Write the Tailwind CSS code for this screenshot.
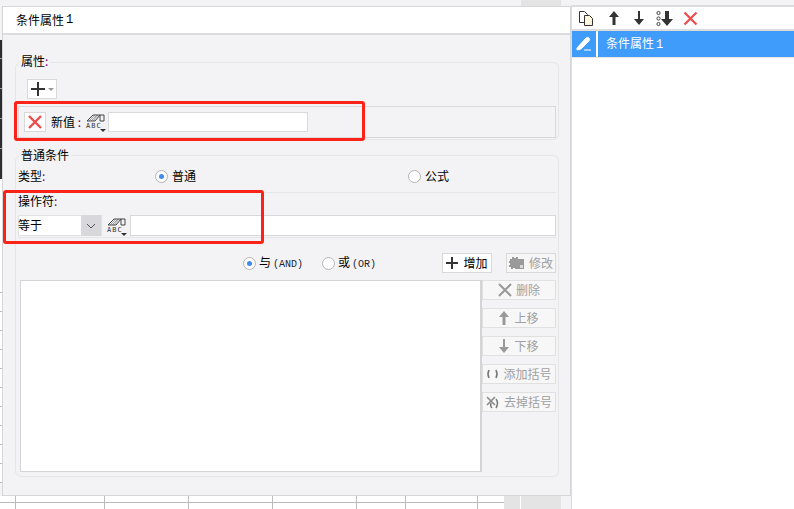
<!DOCTYPE html>
<html lang="zh">
<head>
  <meta charset="UTF-8">
  <title>条件属性</title>
  <script src="https://cdn.jsdelivr.net/npm/@tailwindcss/browser@4"></script>
</head>
<body class="w-[794px] h-[509px] overflow-hidden relative flex bg-white text-[12px] leading-none text-black font-['Noto_Sans_CJK_SC','Liberation_Sans',sans-serif]">

  <!-- left: dialog with sheet behind -->
  <div class="w-[571px] h-[509px] flex flex-col bg-[#f3f3f5]">
    <div class="h-[6px] flex shrink-0">
      <div class="w-[521px]"></div>
      <div class="w-[40px] bg-[#e4e4e4]"></div>
    </div>

    <div class="h-[490px] flex shrink-0">
      <!-- sheet row headers peeking out -->
      <div class="w-[2px] flex flex-col shrink-0">
        <div class="h-[34px] bg-[#f3f3f5]"></div>
        <div class="h-[19px] bg-[#2b2d2f] border-b border-[#999]"></div>
        <div class="h-[30px] bg-[#2b2d2f] border-b border-[#999]"></div>
        <div class="h-[30px] bg-[#2b2d2f] border-b border-[#999]"></div>
        <div class="h-[30px] bg-[#2b2d2f] border-b border-[#999]"></div>
        <div class="h-[30px] bg-[#2b2d2f]"></div>
        <div class="h-[95px] bg-white"></div>
        <div class="h-[19px] bg-white border-b border-[#bbb]"></div>
        <div class="h-[19px] bg-white border-b border-[#bbb]"></div>
        <div class="h-[19px] bg-white border-b border-[#bbb]"></div>
        <div class="h-[19px] bg-white border-b border-[#bbb]"></div>
        <div class="h-[19px] bg-white border-b border-[#bbb]"></div>
        <div class="h-[19px] bg-white border-b border-[#bbb]"></div>
        <div class="h-[19px] bg-white border-b border-[#bbb]"></div>
        <div class="h-[19px] bg-white border-b border-[#bbb]"></div>
        <div class="h-[19px] bg-white border-b border-[#bbb]"></div>
        <div class="h-[19px] bg-white border-b border-[#bbb]"></div>
        <div class="h-[19px] bg-white border-b border-[#bbb]"></div>
      </div>

      <!-- dialog -->
      <div class="w-[569px] h-[490px] border border-[#d6d6d8] bg-[#f3f3f5] flex flex-col">
        <div class="h-[28px] bg-white border-b-2 border-[#dcdcde] flex items-center pl-[13px] shrink-0">条件属性<span class="ml-[2px] font-['Liberation_Mono',monospace] text-[12px]">1</span></div>

        <!-- 属性 group -->
        <div class="relative ml-[12px] mt-[27px] w-[544px] h-[78px] border border-[#e6e6e9] rounded-[6px] px-[2px] pt-[16px] shrink-0">
          <span class="absolute left-[3px] top-[-8px] px-[2px] bg-[#f3f3f5]">属性<span class="text-[#707]">:</span></span>
          <div class="ml-[9px] w-[30px] h-[20px] bg-white border border-[#d9d9d9] flex items-center justify-center">
            <svg width="28" height="18" viewBox="0 0 28 18"><path d="M3 9h14M10 2v14" stroke="#333" stroke-width="2"/><path d="M20 8h6l-3 3z" fill="#999"/></svg>
          </div>
          <div class="mt-[7px] h-[32px] border border-[#d9d9db] flex items-center pl-[5px]">
            <div class="w-[22px] h-[20px] bg-white border border-[#d9d9d9] flex items-center justify-center">
              <svg width="16" height="16" viewBox="0 0 16 16"><path d="M2 2l12 12M14 2L2 14" stroke="#ee4b4b" stroke-width="2.4"/></svg>
            </div>
            <span class="ml-[5px] w-[35px]">新值<span class="text-[#707]"> :</span></span>
            <div class="relative w-[20px] h-[20px] shrink-0">
              <svg class="block" width="20" height="11" viewBox="0 0 20 11"><path d="M1 9l6-6h7l-5 6zM14 3h4v6h-4z" fill="none" stroke="#444" stroke-width="1"/><path d="M3 9l6-6M5 9l6-6M7 9l5-6" stroke="#666" stroke-width="0.6"/></svg>
              <span class="block text-[7px] leading-[7px] tracking-[1px] font-['DejaVu_Sans_Mono',monospace] text-[#333]">ABC</span>
              <svg class="absolute right-0 bottom-0" width="6" height="3" viewBox="0 0 6 3"><path d="M0 0h6L3 3z" fill="#333"/></svg>
            </div>
            <div class="ml-[2px] w-[200px] h-[20px] bg-white border border-[#d9d9d9]"></div>
          </div>
        </div>

        <!-- 普通条件 group -->
        <div class="relative ml-[12px] mt-[15px] w-[544px] h-[322px] border border-[#e6e6e9] rounded-[6px] px-[2px] pt-[11px] shrink-0">
          <span class="absolute left-[3px] top-[-7px] px-[2px] bg-[#f3f3f5]">普通条件</span>

          <div class="h-[18px] flex items-center">
            <span class="w-[137px]">类型<span class="text-[#707]">:</span></span>
            <div class="w-[253px] flex items-center gap-[4px]">
              <span class="w-[13px] h-[13px] rounded-full border border-[#b4b4b4] bg-white flex items-center justify-center"><span class="w-[5px] h-[5px] rounded-full bg-[#3f8cf0]"></span></span>
              <span>普通</span>
            </div>
            <div class="flex items-center gap-[4px]">
              <span class="w-[13px] h-[13px] rounded-full border border-[#b4b4b4] bg-white"></span>
              <span>公式</span>
            </div>
          </div>
          <div class="mt-[7px] h-px bg-[#e6e6e9]"></div>

          <div class="mt-[1px] h-[14px] flex items-center">操作符<span class="text-[#707]">:</span></div>
          <div class="mt-[7px] h-[21px] flex items-center">
            <div class="w-[84px] h-[21px] bg-white border border-[#e2e2e2] flex items-center justify-between">
              <span class="ml-[-1px] mt-[-1px]">等于</span>
              <span class="w-[20px] h-[21px] bg-[#d8d8dc] flex items-center justify-center">
                <svg width="10" height="6" viewBox="0 0 10 6"><path d="M1 1l4 4 4-4" fill="none" stroke="#555" stroke-width="1"/></svg>
              </span>
            </div>
            <div class="relative ml-[5px] w-[20px] h-[20px] shrink-0">
              <svg class="block" width="20" height="11" viewBox="0 0 20 11"><path d="M1 9l6-6h7l-5 6zM14 3h4v6h-4z" fill="none" stroke="#444" stroke-width="1"/><path d="M3 9l6-6M5 9l6-6M7 9l5-6" stroke="#666" stroke-width="0.6"/></svg>
              <span class="block text-[7px] leading-[7px] tracking-[1px] font-['DejaVu_Sans_Mono',monospace] text-[#333]">ABC</span>
              <svg class="absolute right-0 bottom-0" width="6" height="3" viewBox="0 0 6 3"><path d="M0 0h6L3 3z" fill="#333"/></svg>
            </div>
            <div class="ml-[3px] flex-1 h-[21px] bg-white border border-[#d9d9d9]"></div>
          </div>
          <div class="mt-[1px] h-px bg-[#e6e6e9]"></div>

          <div class="mt-[15px] h-[20px] flex items-center">
            <div class="ml-[225px] w-[79px] flex items-center gap-[3px]">
              <span class="w-[13px] h-[13px] rounded-full border border-[#b4b4b4] bg-white flex items-center justify-center"><span class="w-[5px] h-[5px] rounded-full bg-[#3f8cf0]"></span></span>
              <span>与<span class="ml-[2px] text-[10px] font-['Liberation_Mono',monospace] text-[#223]">(AND)</span></span>
            </div>
            <div class="w-[120px] flex items-center gap-[3px]">
              <span class="w-[13px] h-[13px] rounded-full border border-[#b4b4b4] bg-white"></span>
              <span>或<span class="ml-[2px] text-[10px] font-['Liberation_Mono',monospace] text-[#223]">(OR)</span></span>
            </div>
            <div class="w-[50px] h-[20px] bg-white border border-[#d9d9d9] flex items-center justify-center gap-[5px]">
              <svg width="12" height="12" viewBox="0 0 12 12"><path d="M0 6h12M6 0v12" stroke="#333" stroke-width="2"/></svg>
              <span>增加</span>
            </div>
            <div class="ml-[14px] w-[50px] h-[20px] bg-[#f6f6f7] border border-[#d9d9d9] flex items-center justify-center gap-[4px] text-[#a0a0a0]">
              <svg width="16" height="14" viewBox="0 0 16 14"><path d="M1 3h2V1h2v1h2V1h2v2h6v10H6v-1H4v1H2v-2H0V9h1V7H0V5h1z" fill="#9a9a9a"/><rect x="11" y="9" width="3" height="3" fill="#d8d8d8"/></svg>
              <span>修改</span>
            </div>
          </div>

          <div class="mt-[7px] flex">
            <div class="ml-[2px] w-[462px] h-[192px] bg-white border border-[#d4d4d6] border-r-2"></div>
            <div class="w-[74px] flex flex-col gap-[8px] text-[#a0a0a0]">
              <div class="h-[20px] bg-[#f7f7f8] border border-[#e0e0e0] flex items-center justify-center gap-[4px]">
                <svg width="14" height="14" viewBox="0 0 14 14"><path d="M1 1l12 12M13 1L1 13" stroke="#999" stroke-width="2"/></svg>
                <span>删除</span>
              </div>
              <div class="h-[20px] bg-[#f7f7f8] border border-[#e0e0e0] flex items-center justify-center gap-[5px]">
                <svg width="10" height="14" viewBox="0 0 10 14"><path d="M5 0l5 6H6.5v8h-3V6H0z" fill="#999"/></svg>
                <span>上移</span>
              </div>
              <div class="h-[20px] bg-[#f7f7f8] border border-[#e0e0e0] flex items-center justify-center gap-[5px]">
                <svg width="10" height="14" viewBox="0 0 10 14"><path d="M5 14l5-6H6V0H4v8H0z" fill="#999"/></svg>
                <span>下移</span>
              </div>
              <div class="h-[20px] bg-[#f7f7f8] border border-[#e0e0e0] flex items-center justify-center gap-[4px]">
                <svg width="13" height="10" viewBox="0 0 13 10"><path d="M3 1Q1 5 3 9M10 1q2 4 0 8" fill="none" stroke="#777" stroke-width="1.6"/></svg>
                <span>添加括号</span>
              </div>
              <div class="h-[20px] bg-[#f7f7f8] border border-[#e0e0e0] flex items-center justify-center gap-[4px]">
                <svg width="14" height="13" viewBox="0 0 14 13"><path d="M1 1l8 8M9 1L1 9" stroke="#888" stroke-width="1.6"/><path d="M10 3q3 4 0 9M5 7q-1 3 1 5" fill="none" stroke="#777" stroke-width="1.5"/></svg>
                <span>去掉括号</span>
              </div>
            </div>
          </div>
        </div>
      </div>
    </div>

    <!-- sheet grid under the dialog -->
    <div class="h-[13px] flex shrink-0">
      <div class="w-[504px] bg-white flex">
        <div class="w-[15px] h-full border-t-0 flex flex-col"><div class="h-[6px] bg-white"></div><div class="h-px bg-[#bbb]"></div></div>
        <div class="w-[89px] border-l border-[#bbb] flex flex-col"><div class="h-[6px]"></div><div class="h-px bg-[#bbb]"></div></div>
        <div class="w-[84px] border-l border-[#bbb] flex flex-col"><div class="h-[6px]"></div><div class="h-px bg-[#bbb]"></div></div>
        <div class="w-[84px] border-l border-[#bbb] flex flex-col"><div class="h-[6px]"></div><div class="h-px bg-[#bbb]"></div></div>
        <div class="w-[84px] border-l border-[#bbb] flex flex-col"><div class="h-[6px]"></div><div class="h-px bg-[#bbb]"></div></div>
        <div class="w-[49px] border-l border-[#bbb] flex flex-col"><div class="h-[6px]"></div><div class="h-px bg-[#bbb]"></div></div>
        <div class="w-[72px] border-l border-[#bbb] flex flex-col"><div class="h-[6px]"></div><div class="h-px bg-[#bbb]"></div></div>
        <div class="w-[27px] border-l border-[#bbb] flex flex-col"><div class="h-[6px]"></div><div class="h-px bg-[#bbb]"></div></div>
      </div>
      <div class="w-[16px] bg-[#e4e4e4]"></div>
      <div class="w-[1px] bg-white"></div>
      <div class="w-[40px] bg-[#e4e4e4]"></div>
      <div class="w-[10px] bg-[#f3f3f5]"></div>
    </div>
  </div>

  <!-- right: condition list -->
  <div class="w-[223px] h-[509px] flex flex-col bg-[#f3f3f5] pt-[5px]">
    <div class="flex-1 bg-white border-l border-t-2 border-[#dcdcde] flex flex-col">
      <div class="h-[24px] border-b-2 border-[#dcdcde] flex items-center pl-[6px] shrink-0">
        <svg width="17" height="17" viewBox="0 0 17 17"><path d="M1.5 1.5h5l3 3v8h-8z" fill="#fff" stroke="#333"/><path d="M6.5 5.5h5l3 3v7h-8z" fill="#fdf5dc" stroke="#333"/></svg>
        <svg class="ml-[13px]" width="12" height="14" viewBox="0 0 12 14"><path d="M6 0l5 6H7.5v8h-3V6H1z" fill="#333"/></svg>
        <svg class="ml-[13px]" width="12" height="14" viewBox="0 0 12 14"><path d="M6 14l5-6H7V0H5v8H1z" fill="#333"/></svg>
        <svg class="ml-[11px]" width="18" height="17" viewBox="0 0 18 17"><circle cx="2.5" cy="3" r="1.6" fill="none" stroke="#444"/><circle cx="2.5" cy="8.5" r="1.6" fill="none" stroke="#444"/><circle cx="2.5" cy="14" r="1.6" fill="none" stroke="#444"/><path d="M11 16l6-7h-4V1H9v8H5z" fill="#333"/></svg>
        <svg class="ml-[9px]" width="15" height="15" viewBox="0 0 15 15"><path d="M1.5 1.5l12 12M13.5 1.5l-12 12" stroke="#ee4b4b" stroke-width="2.2"/></svg>
      </div>
      <div class="h-[26px] bg-[#409cfb] flex items-center text-white shrink-0">
        <div class="w-[24px] h-full flex items-center justify-center border-r-2 border-white box-content">
          <svg width="16" height="16" viewBox="0 0 16 16"><path d="M1 12L10 2q2-1 3 0t0 3L5 13l-4 1zM8 14h7" fill="#fff" stroke="#fff" stroke-width="1"/></svg>
        </div>
        <span class="ml-[8px]">条件属性<span class="ml-[2px] font-['Liberation_Mono',monospace] text-[12px]">1</span></span>
      </div>
      <div class="h-px bg-[#e6e6e8]"></div>
    </div>
  </div>

  <!-- red annotation boxes drawn over the dialog -->
  <div class="absolute left-[14px] top-[101px] w-[351px] h-[40px] border-[3px] border-[#fb2218] rounded-[3px]"></div>
  <div class="absolute left-[3px] top-[190px] w-[261px] h-[54px] border-[3px] border-[#fb2218] rounded-[3px]"></div>
</body>
</html>
